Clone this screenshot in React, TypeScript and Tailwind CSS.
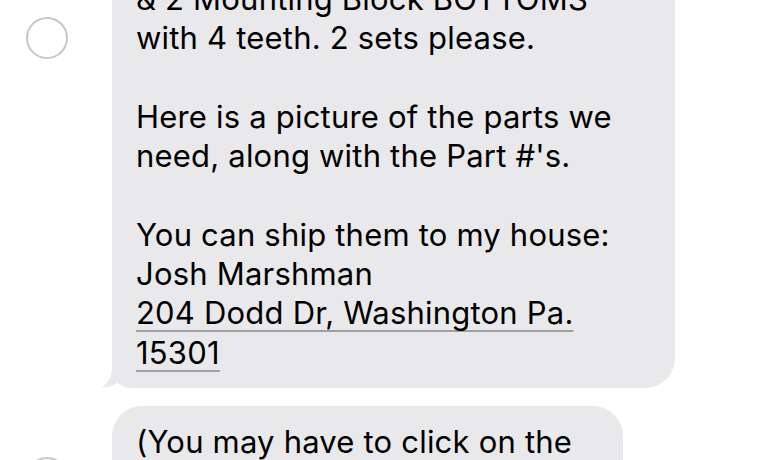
import * as React from 'react';

const lines1 = [
  '& 2 Mounting Block BOTTOMS',
  'with 4 teeth. 2 sets please.',
  '',
  'Here is a picture of the parts we',
  "need, along with the Part #'s.",
  '',
  'You can ship them to my house:',
  'Josh Marshman',
];

const SelectCircle: React.FC<{ className?: string }> = ({ className = '' }) => (
  <div
    className={`w-[42px] h-[42px] rounded-full border-[2.5px] border-[#c6c6c9] ml-[26px] ${className}`}
  />
);

const Tail: React.FC = () => (
  <svg
    className="absolute left-[-12px] bottom-0"
    width="30"
    height="22"
    viewBox="0 0 30 22"
  >
    <path
      d="M12 0 C12 11 8 17.5 1.5 21.6 C8 21.8 13.5 19.5 17.5 16.5 C20.5 19.5 25 22 30 22 L30 0 Z"
      fill="#e9e9eb"
    />
  </svg>
);

export default function App() {
  return (
    <div
      className="w-[768px] h-[460px] overflow-hidden bg-white text-black"
      style={{ fontFamily: 'Inter, "Noto Sans", sans-serif' }}
    >
      <div className="-mt-[37px]">
        {/* message 1 */}
        <div className="flex">
          <div className="w-[112px] shrink-0">
            <SelectCircle className="mt-[54px]" />
          </div>
          <div className="relative w-[563px] rounded-[30px] rounded-bl-[22px] bg-[#e9e9eb] px-[24px] py-[16px] text-[31px] leading-[39.3px] tracking-[0.2px]">
            {lines1.map((l, i) => (
              <div key={i} className="whitespace-nowrap h-[39.3px]">
                {l}
              </div>
            ))}
            <div className="whitespace-nowrap h-[39.3px]">
              <span className="underline decoration-[#a0a0a4] decoration-[1.5px] underline-offset-[6px]">
                204 Dodd Dr, Washington Pa.
              </span>
            </div>
            <div className="whitespace-nowrap h-[39.3px]">
              <span className="underline decoration-[#a0a0a4] decoration-[1.5px] underline-offset-[6px]">
                15301
              </span>
            </div>
            <Tail />
          </div>
        </div>

        {/* message 2 */}
        <div className="flex mt-[18px]">
          <div className="w-[112px] shrink-0">
            <SelectCircle className="mt-[51px]" />
          </div>
          <div className="relative w-[511px] rounded-[30px] bg-[#e9e9eb] px-[24px] py-[16px] text-[31px] leading-[39.3px] tracking-[0.2px]">
            <div className="whitespace-nowrap h-[39.3px]">(You may have to click on the</div>
            <div className="whitespace-nowrap h-[39.3px]">picture to see all of it)</div>
          </div>
        </div>
      </div>
    </div>
  );
}
